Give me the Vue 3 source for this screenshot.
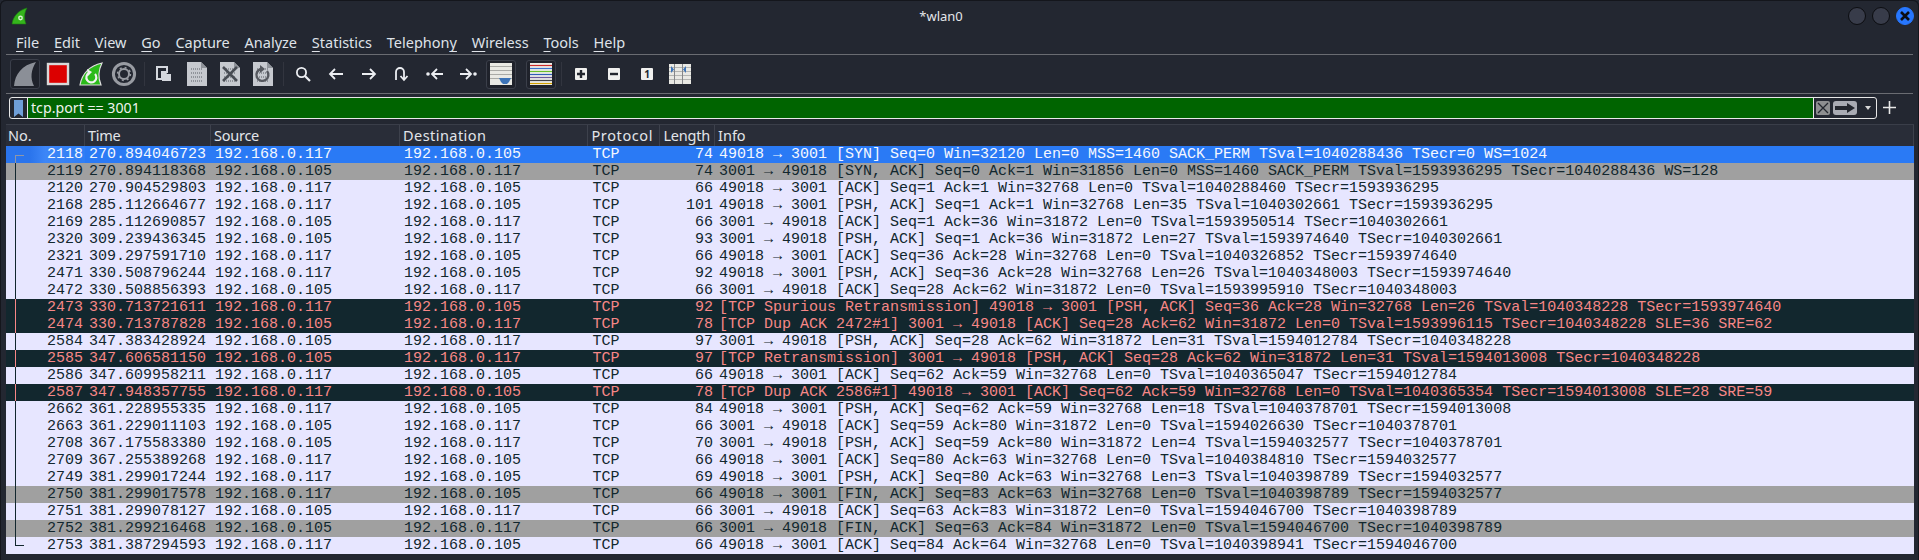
<script setup>
const raw = `2118|270.894046723|192.168.0.117|192.168.0.105|74|49018 → 3001 [SYN] Seq=0 Win=32120 Len=0 MSS=1460 SACK_PERM TSval=1040288436 TSecr=0 WS=1024|sel
2119|270.894118368|192.168.0.105|192.168.0.117|74|3001 → 49018 [SYN, ACK] Seq=0 Ack=1 Win=31856 Len=0 MSS=1460 SACK_PERM TSval=1593936295 TSecr=1040288436 WS=128|gray
2120|270.904529803|192.168.0.117|192.168.0.105|66|49018 → 3001 [ACK] Seq=1 Ack=1 Win=32768 Len=0 TSval=1040288460 TSecr=1593936295|tcp
2168|285.112664677|192.168.0.117|192.168.0.105|101|49018 → 3001 [PSH, ACK] Seq=1 Ack=1 Win=32768 Len=35 TSval=1040302661 TSecr=1593936295|tcp
2169|285.112690857|192.168.0.105|192.168.0.117|66|3001 → 49018 [ACK] Seq=1 Ack=36 Win=31872 Len=0 TSval=1593950514 TSecr=1040302661|tcp
2320|309.239436345|192.168.0.105|192.168.0.117|93|3001 → 49018 [PSH, ACK] Seq=1 Ack=36 Win=31872 Len=27 TSval=1593974640 TSecr=1040302661|tcp
2321|309.297591710|192.168.0.117|192.168.0.105|66|49018 → 3001 [ACK] Seq=36 Ack=28 Win=32768 Len=0 TSval=1040326852 TSecr=1593974640|tcp
2471|330.508796244|192.168.0.117|192.168.0.105|92|49018 → 3001 [PSH, ACK] Seq=36 Ack=28 Win=32768 Len=26 TSval=1040348003 TSecr=1593974640|tcp
2472|330.508856393|192.168.0.105|192.168.0.117|66|3001 → 49018 [ACK] Seq=28 Ack=62 Win=31872 Len=0 TSval=1593995910 TSecr=1040348003|tcp
2473|330.713721611|192.168.0.117|192.168.0.105|92|[TCP Spurious Retransmission] 49018 → 3001 [PSH, ACK] Seq=36 Ack=28 Win=32768 Len=26 TSval=1040348228 TSecr=1593974640|bad
2474|330.713787828|192.168.0.105|192.168.0.117|78|[TCP Dup ACK 2472#1] 3001 → 49018 [ACK] Seq=28 Ack=62 Win=31872 Len=0 TSval=1593996115 TSecr=1040348228 SLE=36 SRE=62|bad
2584|347.383428924|192.168.0.105|192.168.0.117|97|3001 → 49018 [PSH, ACK] Seq=28 Ack=62 Win=31872 Len=31 TSval=1594012784 TSecr=1040348228|tcp
2585|347.606581150|192.168.0.105|192.168.0.117|97|[TCP Retransmission] 3001 → 49018 [PSH, ACK] Seq=28 Ack=62 Win=31872 Len=31 TSval=1594013008 TSecr=1040348228|bad
2586|347.609958211|192.168.0.117|192.168.0.105|66|49018 → 3001 [ACK] Seq=62 Ack=59 Win=32768 Len=0 TSval=1040365047 TSecr=1594012784|tcp
2587|347.948357755|192.168.0.117|192.168.0.105|78|[TCP Dup ACK 2586#1] 49018 → 3001 [ACK] Seq=62 Ack=59 Win=32768 Len=0 TSval=1040365354 TSecr=1594013008 SLE=28 SRE=59|bad
2662|361.228955335|192.168.0.117|192.168.0.105|84|49018 → 3001 [PSH, ACK] Seq=62 Ack=59 Win=32768 Len=18 TSval=1040378701 TSecr=1594013008|tcp
2663|361.229011103|192.168.0.105|192.168.0.117|66|3001 → 49018 [ACK] Seq=59 Ack=80 Win=31872 Len=0 TSval=1594026630 TSecr=1040378701|tcp
2708|367.175583380|192.168.0.105|192.168.0.117|70|3001 → 49018 [PSH, ACK] Seq=59 Ack=80 Win=31872 Len=4 TSval=1594032577 TSecr=1040378701|tcp
2709|367.255389268|192.168.0.117|192.168.0.105|66|49018 → 3001 [ACK] Seq=80 Ack=63 Win=32768 Len=0 TSval=1040384810 TSecr=1594032577|tcp
2749|381.299017244|192.168.0.117|192.168.0.105|69|49018 → 3001 [PSH, ACK] Seq=80 Ack=63 Win=32768 Len=3 TSval=1040398789 TSecr=1594032577|tcp
2750|381.299017578|192.168.0.117|192.168.0.105|66|49018 → 3001 [FIN, ACK] Seq=83 Ack=63 Win=32768 Len=0 TSval=1040398789 TSecr=1594032577|gray
2751|381.299078127|192.168.0.105|192.168.0.117|66|3001 → 49018 [ACK] Seq=63 Ack=83 Win=31872 Len=0 TSval=1594046700 TSecr=1040398789|tcp
2752|381.299216468|192.168.0.105|192.168.0.117|66|3001 → 49018 [FIN, ACK] Seq=63 Ack=84 Win=31872 Len=0 TSval=1594046700 TSecr=1040398789|gray
2753|381.387294593|192.168.0.117|192.168.0.105|66|49018 → 3001 [ACK] Seq=84 Ack=64 Win=32768 Len=0 TSval=1040398941 TSecr=1594046700|tcp`

const rows = raw.split('\n').map((line, i, all) => {
  const [no, time, src, dst, len, info, kind] = line.split('|')
  const link = i === 0 ? 'first' : i === all.length - 1 ? 'last' : 'mid'
  return { no, time, src, dst, len, info, kind, link }
})

const menus = [
  ['F', 'ile'], ['E', 'dit'], ['V', 'iew'], ['G', 'o'], ['C', 'apture'], ['A', 'nalyze'],
  ['S', 'tatistics'], ['Telephon', 'y', true], ['W', 'ireless'], ['T', 'ools'], ['H', 'elp'],
]
const pageRows = [0, 1, 2, 3]
</script>

<template>
  <div class="win">
    <header class="titlebar">
      <svg class="logo" width="18" height="18" viewBox="0 0 18 18">
        <path d="M1 17 C2 9 8 3 16 1 C13 6 13 12 15 17 Z" fill="#35b51c" stroke="#1d7d12" stroke-width=".6" />
        <circle cx="9.5" cy="11" r="2.4" fill="#d8f0d0" />
        <circle cx="9.5" cy="11" r="1" fill="#35b51c" />
      </svg>
      <div class="title">*wlan0</div>
      <div class="controls">
        <span class="ctl"></span>
        <span class="ctl"></span>
        <span class="ctl close">
          <svg width="12" height="12" viewBox="0 0 12 12"><path d="M2 2 L10 10 M10 2 L2 10" stroke="#0b0d14" stroke-width="2.6" /></svg>
        </span>
      </div>
    </header>

    <nav class="menubar">
      <span v-for="m in menus" :key="m[0] + m[1]" class="menu"><template v-if="m[2]">{{ m[0] }}<u>{{ m[1] }}</u></template><template v-else><u>{{ m[0] }}</u>{{ m[1] }}</template></span>
    </nav>

    <div class="toolbar">
      <span class="tb on">
        <svg width="28" height="28" viewBox="0 0 28 28"><path d="M3 26 C4 14 11 5 25 2 C20 10 19 18 23 26 Z" fill="#8b8f97" /></svg>
      </span>
      <span class="tb">
        <svg width="24" height="24" viewBox="0 0 24 24"><rect x="2" y="2" width="20" height="20" fill="#dc0000" stroke="#d8d8d8" stroke-width="2.4" /></svg>
      </span>
      <span class="tb">
        <svg width="26" height="26" viewBox="0 0 26 26">
          <path d="M2 24 C4 13 11 5 24 2 C20 10 20 17 23 24 Z" fill="#2bbb1a" stroke="#dedede" stroke-width="1.2" />
          <path d="M17 13 A5 5 0 1 1 11 12" fill="none" stroke="#f2f2f2" stroke-width="2.2" />
          <path d="M9 8 L14 11 L10 15 Z" fill="#f2f2f2" />
        </svg>
      </span>
      <span class="tb">
        <svg width="26" height="26" viewBox="0 0 26 26">
          <circle cx="13" cy="13" r="10.6" fill="none" stroke="#989ba2" stroke-width="3" />
          <circle cx="13" cy="13" r="5" fill="none" stroke="#989ba2" stroke-width="2" />
          <circle cx="13" cy="13" r="6.4" fill="none" stroke="#989ba2" stroke-width="1.6" stroke-dasharray="2 3" />
        </svg>
      </span>
      <span class="sep"></span>
      <span class="tb">
        <svg width="16" height="16" viewBox="0 0 16 16">
          <path d="M1 1 H11 V6 H6 V13 H1 Z" fill="none" stroke="#d5d8de" stroke-width="2" />
          <path d="M6 6 H10 L11 8 H15 V15 H6 Z" fill="#d5d8de" />
        </svg>
      </span>
      <span v-for="k in ['plain', 'close', 'reload']" :key="k" class="tb">
        <svg width="20" height="24" viewBox="0 0 20 24">
          <path d="M0 0 H14 L20 6 V24 H0 Z" fill="#c6c9cf" />
          <path d="M14 0 L20 6 H14 Z" fill="#8f939a" />
          <path v-for="r in pageRows" :key="r" :d="`M4 ${7 + r * 4} H16`" stroke="#8f939a" stroke-width="2" stroke-dasharray="1 1" fill="none" />
          <path v-if="k === 'close'" d="M3 5 L17 19 M17 5 L3 19" stroke="#484c54" stroke-width="2.6" />
          <template v-if="k === 'reload'">
            <path d="M14 9 A6 6 0 1 1 8 7" fill="none" stroke="#55585f" stroke-width="2.4" />
            <path d="M7 3 L12 7 L7 11 Z" fill="#55585f" />
          </template>
        </svg>
      </span>
      <span class="sep"></span>
      <span class="tb">
        <svg width="16" height="16" viewBox="0 0 16 16"><circle cx="6.5" cy="6.5" r="4.6" fill="none" stroke="#eceef2" stroke-width="1.8" /><path d="M10 10 L15 15" stroke="#eceef2" stroke-width="2.2" /></svg>
      </span>
      <span class="tb">
        <svg width="16" height="14" viewBox="0 0 16 14"><path d="M15 7 H2 M7 2 L2 7 L7 12" fill="none" stroke="#eceef2" stroke-width="1.8" /></svg>
      </span>
      <span class="tb">
        <svg width="16" height="14" viewBox="0 0 16 14"><path d="M1 7 H14 M9 2 L14 7 L9 12" fill="none" stroke="#eceef2" stroke-width="1.8" /></svg>
      </span>
      <span class="tb">
        <svg width="16" height="16" viewBox="0 0 16 16"><path d="M2 14 V6 A4 4 0 0 1 10 6 V13 M6.5 10 L10 14 L13.5 10" fill="none" stroke="#eceef2" stroke-width="1.8" /></svg>
      </span>
      <span class="tb">
        <svg width="18" height="14" viewBox="0 0 18 14"><circle cx="2" cy="7" r="1.8" fill="#eceef2" /><path d="M17 7 H6 M11 2 L6 7 L11 12" fill="none" stroke="#eceef2" stroke-width="1.8" /></svg>
      </span>
      <span class="tb">
        <svg width="18" height="14" viewBox="0 0 18 14"><circle cx="16" cy="7" r="1.8" fill="#eceef2" /><path d="M1 7 H12 M7 2 L12 7 L7 12" fill="none" stroke="#eceef2" stroke-width="1.8" /></svg>
      </span>
      <span class="tb">
        <span class="boxed">
          <svg width="22" height="22" viewBox="0 0 22 22">
            <rect width="22" height="22" fill="#e9e9e4" />
            <path d="M0 3.5 H22 M0 7.5 H22 M0 11.5 H22 M0 15.5 H22" stroke="#a9aaa6" stroke-width="1" />
            <path d="M9 15 H21 L19 19 L17 21 H13 L11 19 Z" fill="#3d74b8" />
          </svg>
        </span>
      </span>
      <span class="sep gap-only"></span>
      <span class="tb">
        <span class="boxed">
          <svg width="22" height="22" viewBox="0 0 22 22">
            <rect width="22" height="22" fill="#eeeeea" />
            <path d="M0 2.5 H22" stroke="#cc2b2b" stroke-width="1.2" />
            <path d="M0 5.5 H22" stroke="#3b6fc9" stroke-width="1.2" />
            <path d="M0 8.5 H22" stroke="#6bbf2a" stroke-width="1.2" />
            <path d="M0 11.5 H22" stroke="#2f5fb5" stroke-width="1.2" />
            <path d="M0 14.5 H22" stroke="#6a5a9a" stroke-width="1.2" />
            <path d="M0 17.5 H22" stroke="#444" stroke-width="1.2" />
            <path d="M0 20.5 H22" stroke="#d3a100" stroke-width="1.2" />
          </svg>
        </span>
      </span>
      <span class="sep"></span>
      <span class="tb"><span class="zoom">
        <svg width="8" height="8" viewBox="0 0 8 8"><path d="M4 0 V8 M0 4 H8" stroke="#23262e" stroke-width="2.4" /></svg>
      </span></span>
      <span class="tb"><span class="zoom">
        <svg width="8" height="8" viewBox="0 0 8 8"><path d="M0 4 H8" stroke="#23262e" stroke-width="2.4" /></svg>
      </span></span>
      <span class="tb"><span class="zoom one">1</span></span>
      <span class="tb">
        <svg width="22" height="20" viewBox="0 0 22 20">
          <rect width="22" height="20" fill="#e9e9e4" />
          <path d="M0 3.5 H22 M0 7.5 H22 M0 11.5 H22 M0 15.5 H22" stroke="#b4b5b1" stroke-width="1" />
          <path d="M5.5 0 V20 M13.5 0 V20" stroke="#85878a" stroke-width="1" />
          <path d="M2 2 L5 5.5 L2 9 Z M17 2 L14 5.5 L17 9 Z" fill="#3d74b8" />
        </svg>
      </span>
    </div>

    <div class="filterbar">
      <div class="filter">
        <span class="bookmark">
          <svg width="9" height="17" viewBox="0 0 9 17"><path d="M0 0 H9 V17 L4.5 13.5 L0 17 Z" fill="#6f9fd8" /></svg>
        </span>
        <span class="fvalue">tcp.port == 3001</span>
        <span class="fbtns">
          <span class="fclear">
            <svg width="12" height="12" viewBox="0 0 12 12"><path d="M1 1 L11 11 M11 1 L1 11" stroke="#23262e" stroke-width="1.3" /></svg>
          </span>
          <span class="fapply">
            <svg width="20" height="10" viewBox="0 0 20 10"><path d="M0 3 H12 V0 L20 5 L12 10 V7 H0 Z" fill="#23262e" /></svg>
          </span>
          <span class="fdrop"></span>
        </span>
      </div>
      <svg class="plus" width="13" height="13" viewBox="0 0 13 13"><path d="M6.5 0 V13 M0 6.5 H13" stroke="#e8e8e8" stroke-width="1.6" /></svg>
    </div>

    <section class="table">
      <div class="head grid">
        <span>No.</span><span class="h-tight">Time</span><span class="h-tight">Source</span><span class="h-dest">Destination</span><span class="h-proto">Protocol</span><span class="h-tight">Length</span><span>Info</span>
      </div>
      <div v-for="r in rows" :key="r.no" class="row grid" :class="r.kind">
        <span class="c no"><i class="link" :class="r.link"></i>{{ r.no }}</span>
        <span class="c">{{ r.time }}</span>
        <span class="c">{{ r.src }}</span>
        <span class="c">{{ r.dst }}</span>
        <span class="c">TCP</span>
        <span class="c len">{{ r.len }}</span>
        <span class="c info">{{ r.info }}</span>
      </div>
    </section>
  </div>
</template>

<style>
html, body { margin: 0; padding: 0; background: #232731; }
</style>

<style scoped>
.win {
  width: 1919px;
  height: 560px;
  box-sizing: border-box;
  background: #232731;
  overflow: hidden;
  border-radius: 6px 6px 0 0;
  box-shadow: inset 0 1px 0 #14161c, inset 1px 0 0 #14161c, inset -1px 0 0 #14161c;
  font-family: "Noto Sans", sans-serif;
  color: #dde0e6;
}
.titlebar {
  height: 32px;
  display: flex;
  align-items: center;
  padding-left: 11px;
  padding-right: 5px;
  box-sizing: border-box;
}
.logo { flex: none; }
.title {
  flex: 1;
  text-align: center;
  font-size: 13px;
  color: #e4e6ea;
  padding-left: 5px;
}
.controls { display: flex; gap: 6px; }
.ctl {
  width: 16px;
  height: 16px;
  border-radius: 50%;
  background: #383c4a;
  border: 1px solid #0c0d11;
  display: flex;
  align-items: center;
  justify-content: center;
}
.ctl.close { background: #2777ff; border-color: #2777ff; }

.menubar {
  height: 22px;
  margin: 0 6px;
  padding-left: 10px;
  padding-bottom: 0;
  display: flex;
  gap: 14.8px;
  align-items: flex-start;
  font-size: 14.5px;
  line-height: 20px;
  color: #dfe2e8;
  border-bottom: 1px solid #6a6c72;
}
.menu u { text-underline-offset: 3px; text-decoration-thickness: 1px; }

.toolbar {
  height: 38px;
  margin: 0 6px;
  padding-left: 2.5px;
  display: flex;
  align-items: center;
  border-bottom: 1px solid #6a6c72;
}
.tb {
  flex: none;
  width: 33px;
  height: 32px;
  display: flex;
  align-items: center;
  justify-content: center;
}
.tb.on {
  box-sizing: border-box;
  width: 30px;
  height: 30px;
  margin: 0 1.5px;
  border: 1px solid #3b3f4a;
  border-radius: 3px;
  background: #1f222b;
}
.sep {
  flex: none;
  width: 7px;
  height: 24px;
  background: linear-gradient(#32353f, #32353f) center / 1px 100% no-repeat;
}
.sep.gap-only { background: none; }
.boxed {
  box-sizing: border-box;
  width: 30px;
  height: 29px;
  border: 1px solid #3b3f4a;
  border-radius: 3px;
  display: flex;
  align-items: center;
  justify-content: center;
  background: #1f222b;
}
.zoom {
  width: 12px;
  height: 12px;
  background: #f0f0ee;
  border-radius: 1px;
  display: flex;
  align-items: center;
  justify-content: center;
}
.zoom.one {
  color: #23262e;
  font-size: 10px;
  font-weight: 700;
  line-height: 12px;
}

.filterbar {
  margin: 3px 6px 0 9px;
  height: 23px;
  display: flex;
  align-items: flex-start;
}
.filter {
  box-sizing: border-box;
  width: 1868px;
  height: 22px;
  display: flex;
  border: 1px solid #e8e8e8;
  border-radius: 3px;
  background: #232731;
}
.bookmark {
  flex: none;
  width: 18px;
  display: flex;
  align-items: center;
  justify-content: center;
  border-right: 1px solid #e8e8e8;
  box-sizing: border-box;
}
.fvalue {
  flex: none;
  width: 1786px;
  box-sizing: border-box;
  background: #006400;
  color: #eef3ee;
  font-size: 14.2px;
  line-height: 20px;
  padding-left: 3px;
  border-right: 1px solid #e8e8e8;
}
.fbtns {
  flex: 1;
  display: flex;
  align-items: center;
  padding-left: 2px;
}
.fclear {
  width: 14px;
  height: 14px;
  border-radius: 2px;
  background: #8d8e90;
  display: flex;
  align-items: center;
  justify-content: center;
}
.fapply {
  width: 24px;
  height: 14px;
  margin-left: 3px;
  border-radius: 3px;
  background: #a9abb3;
  display: flex;
  align-items: center;
  justify-content: center;
}
.fdrop {
  margin-left: 8px;
  width: 0;
  height: 0;
  border-left: 3.5px solid transparent;
  border-right: 3.5px solid transparent;
  border-top: 4px solid #d8d8d8;
}
.plus { flex: none; margin: 4px 0 0 6px; }

.table {
  margin: 4px 5px 0 6px;
  font-family: "Liberation Mono", monospace;
}
.grid {
  display: grid;
  grid-template-columns: 78.5px 126px 189px 188.5px 72px 54.5px 1fr;
}
.head {
  height: 22px;
  box-sizing: border-box;
  background: #292d38;
  border-top: 1px solid #3a3e49;
  font-family: "Noto Sans", sans-serif;
  font-size: 14.5px;
  line-height: 21px;
  color: #e3e5ea;
}
.head span {
  border-right: 1px solid #3d414c;
  white-space: nowrap;
  overflow: hidden;
}
.head span:first-child { padding-left: 2px; }
.head span:not(:first-child) { padding-left: 3.5px; }
.head .h-tight { letter-spacing: -.25px; }
.head .h-dest { letter-spacing: .45px; }
.head .h-proto { letter-spacing: .6px; }
.row {
  height: 17px;
  font-size: 15px;
  line-height: 17px;
  white-space: pre;
}
.c { padding-left: 4.5px; overflow: hidden; }
.no, .len { text-align: right; padding-left: 0; padding-right: 1.5px; }
.no { position: relative; overflow: visible; }
.info { padding-left: 4.5px; }

.tcp { background: #e7e6ff; color: #12272e; }
.gray { background: #a0a0a0; color: #12272e; }
.bad { background: #12272e; color: #f78787; }
.sel { background: #2a7af5; color: #f4f7ff; }
.sel .no { background: linear-gradient(90deg, #2a74ec 0, #2a74ec 30%, #3d86f7 50%, #2f7ef5 100%); }

.link {
  position: absolute;
  left: 9px;
  width: 9px;
  box-sizing: border-box;
  border-left: 1px solid currentColor;
}
.link.mid { top: 0; bottom: 0; }
.link.first { top: 9px; bottom: 0; border-top: 1px solid #8e96a8; border-left-color: #8e96a8; }
.link.last { top: 0; height: 9px; border-bottom: 1px solid currentColor; }
</style>
